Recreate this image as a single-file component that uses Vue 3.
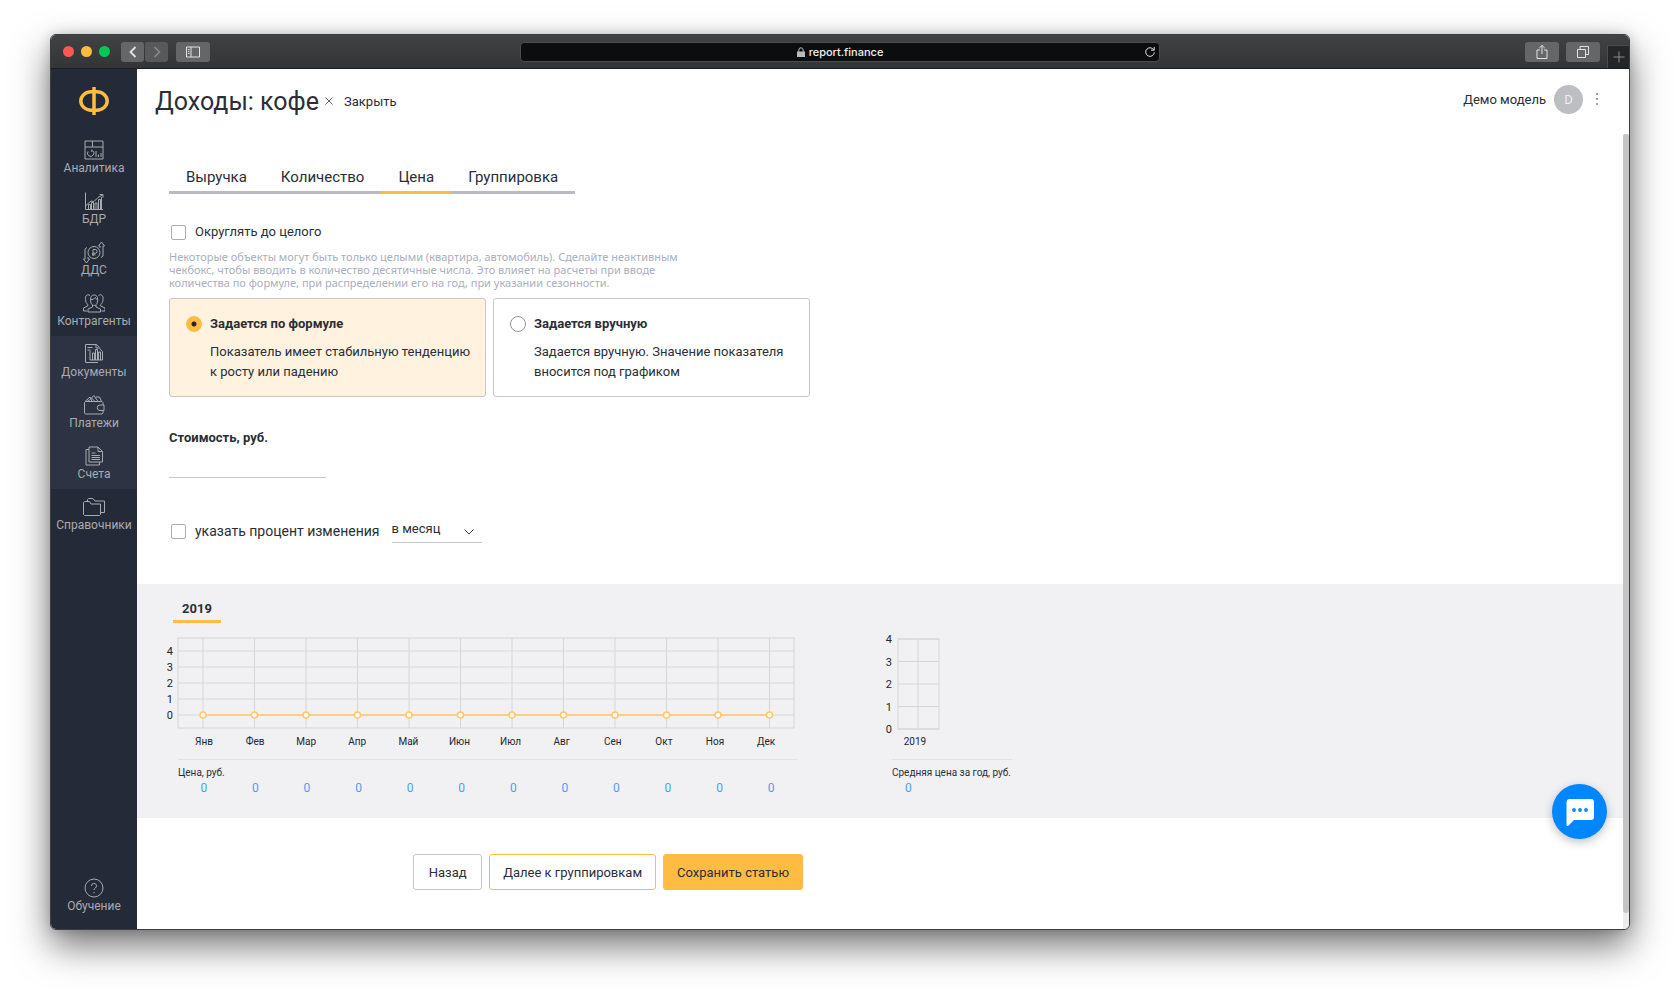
<script setup>
import { ref } from 'vue'

const mainNav = [
  { label: 'Аналитика', d: 'M2 2h18v18H2z M2 8h18 M9.500 2v6 M5 12.500a3.200 3.200 0 1 0 4.600-.9 M8.800 10.500v2.500 M13 18v-6 M15.500 18v-2.500 M18 18v-4' },
  { label: 'БДР', d: 'M2.500 2.500v17h17.500 M5.500 19v-4.500h2V19 M8.500 19v-6.500h2V19 M12 19v-6h2v6 M15.500 19V9.500h2V19 M18.500 19V7 M3 15.500l5-4.500 3 .5 4-4 4.500-2.500 M16.500 4.500h3.500v3' },
  { label: 'ДДС', d: 'M17 11.500a6 6 0 1 1-12 0a6 6 0 1 1 12 0 M10 15V8.500h2.200a1.900 1.900 0 0 1 0 3.800H9 M9 13.800h3.500 M2 8v10H.5l3 4 3-4H5v-2 M2 8l2-1.500 M20 15V5h1.500l-3-4-3 4H17v2 M20 15l-2 1.500' },
  { label: 'Контрагенты', d: 'M7.500 7.500a3.600 4.500 0 0 1 7.200 0c0 4-1.700 6-3.600 6s-3.600-2-3.600-6z M7.500 7.500c2 .5 4-1 5-2 .5 1.500 1.200 2 2.200 2.200 M9.500 13v2l-4.500 2v3h12.500v-3L13 15v-2 M7 3.500C4 1.500 2 4 2.500 7.500c.2 3 1 4 2.300 5v1.500L.5 16v3H4 M15.500 3.500c3-2 5 .5 4.500 4-.2 3-1 4-2.300 5v1.500l4.300 2v3h-3.500' },
]
const docNav = [
  { label: 'Документы', d: 'M15 19.500H2.500v-18h11l3 3 M13 1.500v3.500h3.500 M4.500 4.500h5 M4.500 7h3 M7 8v9h12.500V8.500L16.500 5.500 M9.500 17v-7h2v7 M12.500 17V6.500h2V17 M15.500 17V9h2v8' },
  { label: 'Платежи', d: 'M20 11V8.500l-1-1H2.500l-1 1V19l1 1H19l1-1v-2.500 M21 11h-4a2.700 2.700 0 0 0 0 5.500h4z M2 7.500L7 3l2 4.500 M5 7.500L11 1.500l4 6 M4.500 5.500l1.500 2 M8 3.500l4 4 M13 3h3.500l2 4.500' },
  { label: 'Счета', d: 'M6 2h9l4.500 4.500V17H6z M15 2v4.500h4.500 M6 4.500H3V20h13.500v-3 M8.500 8h4 M8.500 10.500h8.500 M8.500 12.500h8.500 M8.500 14.500h8.500' },
]
const refNav = [
  { label: 'Справочники', d: 'M.5 18.500V6.500l1-1h5l1.500 2.500h9.500v10.500l-1 1h-15z M4.500 5.500V3.500l1-1h4.500L12 5h9.500v11.500h-4' },
]
const helpNav = [
  { label: 'Обучение', d: 'M20 11a9 9 0 1 1-18 0a9 9 0 1 1 18 0 M8.500 9a2.500 2.500 0 1 1 3.800 2c-.9.6-1.300 1-1.300 2 M11 15v1.200' },
]
const navGroups = [
  { name: 'main', items: mainNav },
  { name: 'docs', items: docNav },
  { name: 'refs', items: refNav },
  { name: 'help', items: helpNav },
]

const tabs = ['Выручка', 'Количество', 'Цена', 'Группировка']
const activeTab = ref('Цена')

const modes = [
  { id: 'formula', title: 'Задается по формуле', text: 'Показатель имеет стабильную тенденцию к росту или падению' },
  { id: 'manual', title: 'Задается вручную', text: 'Задается вручную. Значение показателя вносится под графиком' },
]
const mode = ref('formula')

const roundValues = ref(false)
const usePercent = ref(false)
const cost = ref('')
const period = ref('month')

const months = ['Янв', 'Фев', 'Мар', 'Апр', 'Май', 'Июн', 'Июл', 'Авг', 'Сен', 'Окт', 'Ноя', 'Дек']
const prices = ref(months.map(() => 0))
const ticks = [4, 3, 2, 1, 0]

const monthX = (i) => 37 + i * 51.5
const priceY = (v) => 78 - v * 16
const yearY = (v) => 92 - v * 22.5
</script>

<template>
  <div class="window">
    <header class="titlebar">
      <div class="titlebar__left">
        <i class="light light--close"></i>
        <i class="light light--min"></i>
        <i class="light light--max"></i>
        <button class="chrome-btn chrome-btn--back" aria-label="Back">
          <svg width="12" height="14" viewBox="0 0 12 14"><path d="M8.500 2L3.500 7l5 5" stroke-width="1.800"/></svg>
        </button>
        <button class="chrome-btn chrome-btn--forward" aria-label="Forward">
          <svg width="12" height="14" viewBox="0 0 12 14"><path d="M3.500 2l5 5-5 5" stroke-width="1.500"/></svg>
        </button>
        <button class="chrome-btn chrome-btn--wide chrome-btn--side" aria-label="Sidebar">
          <svg width="16" height="12" viewBox="0 0 16 12"><path d="M1.500 1h13v10h-13z M6 1v10 M3 3.500h1.500 M3 5.500h1.500 M3 7.500h1.500"/></svg>
        </button>
      </div>
      <div class="address">
        <svg width="8" height="10" viewBox="0 0 8 10"><path d="M0 4.500h8V10H0z" fill="#b9babb"/><path d="M1.800 5V3a2.200 2.200 0 0 1 4.400 0v2" fill="none" stroke="#b9babb"/></svg>
        <span>report.finance</span>
        <button class="address__reload" aria-label="Reload">
          <svg width="12" height="12" viewBox="0 0 12 12"><path d="M9.800 4A4.300 4.300 0 1 0 10.300 6.500 M10.200 1v3.200H7"/></svg>
        </button>
      </div>
      <div class="titlebar__right">
        <button class="chrome-btn chrome-btn--wide" aria-label="Share">
          <svg width="14" height="16" viewBox="0 0 14 16"><path d="M5 6H2v8.500h10V6H9 M7 10V1.500 M4.300 4L7 1.500 9.700 4"/></svg>
        </button>
        <button class="chrome-btn chrome-btn--wide" aria-label="Tabs">
          <svg width="14" height="14" viewBox="0 0 14 14"><path d="M1.500 4.500h8v8h-8z M4 4.500v-3h8.500v8H9.500"/></svg>
        </button>
        <button class="new-tab" aria-label="New tab">
          <svg width="12" height="12" viewBox="0 0 12 12"><path d="M6 .5v11 M.5 6h11"/></svg>
        </button>
      </div>
    </header>

    <div class="body">
      <aside class="sidebar">
        <a class="logo" href="#" aria-label="report.finance">
          <svg width="30" height="28" viewBox="0 0 30 28"><rect x="1.800" y="4.800" width="26.400" height="18.400" rx="10.500" ry="9.200"/><path d="M15 0v28"/></svg>
        </a>
        <nav v-for="g in navGroups" :key="g.name" :class="['nav', `nav--${g.name}`]">
          <a v-for="item in g.items" :key="item.label" class="nav__item" href="#">
            <svg width="22" height="22" viewBox="0 0 22 22"><path :d="item.d"/></svg>
            <span>{{ item.label }}</span>
          </a>
        </nav>
      </aside>

      <main class="content">
        <div class="head">
          <h1>Доходы: кофе</h1>
          <button class="close">
            <svg width="8" height="8" viewBox="0 0 8 8"><path d="M.5.5l7 7 M7.500.5l-7 7"/></svg>
            <span>Закрыть</span>
          </button>
          <div class="user">
            <span>Демо модель</span>
            <span class="avatar">D</span>
            <button class="more" aria-label="Меню"><i></i><i></i><i></i></button>
          </div>
        </div>

        <form class="form" @submit.prevent>
          <div class="tabs">
            <button
              v-for="t in tabs"
              :key="t"
              type="button"
              :class="['tab', { 'tab--active': t === activeTab }]"
              @click="activeTab = t"
            >{{ t }}</button>
          </div>

          <label class="check">
            <input v-model="roundValues" type="checkbox">
            <span>Округлять до целого</span>
          </label>
          <p class="hint">
            Некоторые объекты могут быть только целыми (квартира, автомобиль). Сделайте неактивным<br>
            чекбокс, чтобы вводить в количество десятичные числа. Это влияет на расчеты при вводе<br>
            количества по формуле, при распределении его на год, при указании сезонности.
          </p>

          <div class="modes">
            <label v-for="m in modes" :key="m.id" :class="['mode', { 'mode--active': m.id === mode }]">
              <input v-model="mode" type="radio" name="mode" :value="m.id">
              <span class="mode__body">
                <b>{{ m.title }}</b>
                <span class="mode__text">{{ m.text }}</span>
              </span>
            </label>
          </div>

          <label class="cost">
            <b>Стоимость, руб.</b>
            <input v-model="cost" type="text">
          </label>

          <div class="percent">
            <label class="check check--large">
              <input v-model="usePercent" type="checkbox">
              <span>указать процент изменения</span>
            </label>
            <div class="period">
              <select v-model="period" aria-label="Период">
                <option value="month">в месяц</option>
                <option value="year">в год</option>
              </select>
              <svg width="12" height="8" viewBox="0 0 12 8"><path d="M1.500 1.500L6 6l4.500-4.500"/></svg>
            </div>
          </div>
        </form>

        <section class="charts">
          <button class="year">2019</button>
          <div class="charts__row">
            <div class="chart">
              <svg class="plot" width="640" height="114" viewBox="0 0 640 114">
                <rect class="grid" x="12" y="1" width="616" height="90"/>
                <line v-for="t in ticks" :key="`h${t}`" class="grid" x1="12" x2="628" :y1="priceY(t)" :y2="priceY(t)"/>
                <line v-for="(m, i) in months" :key="`v${m}`" class="grid" :x1="monthX(i)" :x2="monthX(i)" y1="1" y2="91"/>
                <polyline class="series" :points="prices.map((p, i) => `${monthX(i)},${priceY(p)}`).join(' ')"/>
                <circle v-for="(p, i) in prices" :key="`c${i}`" class="dot" :cx="monthX(i)" :cy="priceY(p)" r="3"/>
                <text v-for="t in ticks" :key="`t${t}`" x="7" :y="priceY(t) + 4" text-anchor="end">{{ t }}</text>
                <text v-for="(m, i) in months" :key="m" class="month" :x="38 + i * 51.1" y="108" text-anchor="middle">{{ m }}</text>
              </svg>
              <table class="values">
                <caption>Цена, руб.</caption>
                <tbody>
                  <tr><td v-for="(p, i) in prices" :key="i">{{ p }}</td></tr>
                </tbody>
              </table>
            </div>
            <div class="chart">
              <svg class="plot" width="120" height="114" viewBox="0 0 120 114">
                <rect class="grid" x="12" y="2" width="41" height="90"/>
                <line v-for="t in ticks" :key="`h${t}`" class="grid" x1="12" x2="53" :y1="yearY(t)" :y2="yearY(t)"/>
                <line class="grid" x1="32" x2="32" y1="2" y2="92"/>
                <text v-for="t in ticks" :key="`t${t}`" x="6" :y="yearY(t) + 4" text-anchor="end">{{ t }}</text>
                <text class="month" x="29" y="108" text-anchor="middle">2019</text>
              </svg>
              <table class="values values--year">
                <caption>Средняя цена за год, руб.</caption>
                <tbody>
                  <tr><td>0</td></tr>
                </tbody>
              </table>
            </div>
          </div>
        </section>

        <footer class="actions">
          <button class="btn">Назад</button>
          <button class="btn btn--outline">Далее к группировкам</button>
          <button class="btn btn--primary">Сохранить статью</button>
        </footer>

        <div class="scroll"><div class="scroll__thumb"></div></div>
        <button class="chat" aria-label="Чат">
          <svg width="28" height="28" viewBox="0 0 28 28"><path d="M3 1h22a3 3 0 0 1 3 3v15a3 3 0 0 1-3 3H8l-5.500 5.500C1.500 28.500.5 28 .5 27V4A3 3 0 0 1 3 1z" fill="#fff"/><g fill="#0086ff"><circle cx="8" cy="12" r="1.900"/><circle cx="14" cy="12" r="1.900"/><circle cx="20" cy="12" r="1.900"/></g></svg>
        </button>
      </main>
    </div>
  </div>
</template>

<style>
body {
  margin: 0;
  background: #fff;
}
</style>

<style scoped>
* {
  box-sizing: border-box;
}

button,
input,
select {
  margin: 0;
  padding: 0;
  border: 0;
  background: none;
  color: inherit;
  font: inherit;
}

button {
  cursor: pointer;
}

.window {
  display: flex;
  flex-direction: column;
  min-height: calc(100vh - 100px);
  margin: 34px 50px 66px;
  overflow: hidden;
  border: 1px solid #3c3d3e;
  border-radius: 6px;
  background: #fff;
  color: #2b2e36;
  font-family: Roboto, "Noto Sans", sans-serif;
  font-size: 13px;
  box-shadow: 0 16px 36px rgba(0, 0, 0, 0.55), 0 0 12px rgba(0, 0, 0, 0.15);
}

/* browser bar */
.titlebar {
  display: grid;
  grid-template-columns: 1fr 640px 1fr;
  align-items: center;
  height: 34px;
  border-bottom: 1px solid #1c1d1e;
  background: linear-gradient(#404243, #333435);
}

.titlebar__left,
.titlebar__right {
  display: flex;
  align-items: center;
}

.titlebar__left {
  padding-left: 12px;
}

.titlebar__right {
  align-self: stretch;
  justify-content: flex-end;
  gap: 7px;
}

.light {
  width: 11px;
  height: 11px;
  margin-right: 7px;
  border-radius: 50%;
}

.light--close {
  background: #fc5753;
}

.light--min {
  background: #fdbc40;
}

.light--max {
  background: #05c753;
}

.chrome-btn {
  display: flex;
  align-items: center;
  justify-content: center;
  width: 23px;
  height: 20px;
  border-radius: 3px;
  background: #656667;
}

.chrome-btn svg,
.new-tab svg,
.address__reload svg {
  fill: none;
  stroke: #e2e2e2;
}

.chrome-btn--back {
  margin-left: 4px;
}

.chrome-btn--forward {
  margin-left: 1px;
  background: #58595a;
}

.chrome-btn--forward svg {
  stroke: #8a8b8c;
}

.chrome-btn--wide {
  width: 34px;
}

.chrome-btn--side {
  margin-left: 8px;
}

.address {
  position: relative;
  display: flex;
  align-items: center;
  justify-content: center;
  gap: 4px;
  height: 20px;
  border: 1px solid #4b4c4d;
  border-radius: 4px;
  background: #0c0d0e;
  color: #f0f0f0;
  font-family: Inter, sans-serif;
  font-size: 11px;
  font-weight: 500;
}

.address__reload {
  position: absolute;
  right: 3px;
  display: flex;
}

.new-tab {
  display: flex;
  align-items: center;
  justify-content: center;
  align-self: flex-end;
  width: 22px;
  height: 23px;
  border: 1px solid #4b4c4d;
  border-width: 1px 0 0 1px;
  background: #252627;
}

.new-tab svg {
  stroke: #8a8b8c;
}

.body {
  display: flex;
  flex: 1;
}

/* sidebar */
.sidebar {
  display: flex;
  flex-direction: column;
  flex: none;
  width: 86px;
  padding-bottom: 8px;
  background: #242a37;
}

.logo {
  display: flex;
  justify-content: center;
  height: 63px;
  padding-top: 18px;
}

.logo svg {
  fill: none;
  stroke: #ffbc42;
  stroke-width: 3.5;
}

.nav--docs {
  background: #2d3343;
}

.nav--help {
  margin-top: auto;
}

.nav__item {
  display: flex;
  flex-direction: column;
  align-items: center;
  height: 51px;
  padding-top: 7px;
  color: #a9abb1;
  font-size: 12px;
  line-height: 14px;
  text-decoration: none;
}

.nav__item svg {
  fill: none;
  stroke: #a9abb1;
  stroke-width: 1;
}

/* page head */
.content {
  position: relative;
  flex: 1;
  min-width: 0;
}

.head {
  display: flex;
  align-items: center;
  height: 64px;
  padding: 0 26px 0 18px;
}

.head h1 {
  margin: 0;
  padding-top: 2px;
  font-size: 25px;
  font-weight: 400;
  line-height: 32px;
}

.close {
  display: flex;
  align-items: center;
  gap: 11px;
  margin-left: 6px;
}

.close svg {
  fill: none;
  stroke: #5c6270;
}

.user {
  display: flex;
  align-items: center;
  gap: 8px;
  margin-left: auto;
  padding-bottom: 4px;
}

.avatar {
  display: flex;
  align-items: center;
  justify-content: center;
  width: 29px;
  height: 29px;
  border-radius: 50%;
  background: #bdbec2;
  color: #eeeeef;
}

.more {
  display: flex;
  flex-direction: column;
  align-items: center;
  gap: 3px;
  width: 12px;
}

.more i {
  width: 2px;
  height: 2px;
  border-radius: 50%;
  background: #7c808a;
}

/* form */
.form {
  padding: 21px 32px 41px;
}

.tabs {
  display: inline-flex;
  vertical-align: top;
}

.tab {
  height: 40px;
  padding: 8px 17px 0;
  border-bottom: 3px solid #b9bbc0;
  font-size: 15px;
  line-height: 18px;
}

.tab--active {
  border-bottom-color: #ffbc42;
}

.check {
  display: flex;
  align-items: center;
  gap: 9px;
  width: max-content;
  margin-top: 28px;
  padding-left: 2px;
  line-height: 20px;
}

.check input {
  width: 15px;
  height: 15px;
  appearance: none;
  border: 1px solid #a9acb5;
  border-radius: 2px;
  background: #fff;
}

.check input:checked {
  background: #ffbc42;
}

.check--large {
  margin-top: 0;
  font-size: 14px;
}

.hint {
  margin: 8px 0 9px;
  color: #a9afbd;
  font-family: "Noto Sans", sans-serif;
  font-size: 11px;
  line-height: 13px;
}

.modes {
  display: flex;
  gap: 7px;
}

.mode {
  display: flex;
  align-items: flex-start;
  gap: 8px;
  width: 317px;
  padding: 15px 15px 14px 16px;
  border: 1px solid #c4c5c9;
  border-radius: 3px;
  line-height: 20px;
}

.mode--active {
  background: #fff3df;
}

.mode input {
  flex: none;
  width: 16px;
  height: 16px;
  margin-top: 2px;
  appearance: none;
  border: 1px solid #92959e;
  border-radius: 50%;
  background: #fff;
}

.mode input:checked {
  border-color: #ffbc42;
  background: radial-gradient(circle, #23262f 2px, #ffbc42 3px);
}

.mode__body b,
.mode__text {
  display: block;
}

.mode__text {
  margin-top: 8px;
}

.cost {
  display: block;
  width: 157px;
  margin-top: 31px;
}

.cost b {
  display: block;
  line-height: 20px;
}

.cost input {
  width: 100%;
  height: 30px;
  border-bottom: 1px solid #c4c5c9;
}

.percent {
  display: flex;
  align-items: center;
  gap: 12px;
  margin-top: 41px;
}

.period {
  position: relative;
  width: 90px;
}

.period select {
  width: 100%;
  height: 24px;
  padding-bottom: 4px;
  appearance: none;
  border-bottom: 1px solid #c4c5c9;
  border-radius: 0;
}

.period svg {
  position: absolute;
  top: 9px;
  right: 7px;
  fill: none;
  stroke: #3a3d46;
  pointer-events: none;
}

/* charts */
.charts {
  padding: 14px 29px 22px;
  margin-right: 6px;
  background: #f1f1f3;
}

.year {
  height: 25px;
  margin-left: 7px;
  padding: 0 9px 2px;
  border-bottom: 3px solid #ffbc42;
  font-weight: 700;
}

.charts__row {
  display: flex;
  gap: 80px;
  padding-top: 14px;
}

.plot {
  display: block;
  overflow: visible;
}

.plot text {
  fill: #23262f;
  font-size: 11px;
}

.plot .month {
  font-size: 10px;
}

.grid {
  fill: none;
  stroke: #d6d6d8;
}

.series {
  fill: none;
  stroke: #ffc96b;
  stroke-width: 1.5;
}

.dot {
  fill: #fff;
  stroke: #ffc96b;
  stroke-width: 1.5;
}

.values {
  width: 619px;
  margin: 8px 0 0 12px;
  border-collapse: collapse;
  table-layout: fixed;
}

.values caption {
  padding-top: 5px;
  border-top: 1px solid #e2e2e4;
  font-size: 10px;
  line-height: 15px;
  text-align: left;
  white-space: nowrap;
}

.values td {
  padding: 0;
  color: #4a9ff0;
  font-size: 12px;
  line-height: 16px;
  text-align: center;
}

.values--year {
  width: 120px;
  margin-left: 6px;
}

.values--year td {
  padding-left: 13px;
  text-align: left;
}

/* bottom buttons */
.actions {
  display: flex;
  justify-content: flex-end;
  gap: 7px;
  width: 666px;
  padding: 36px 0;
}

.btn {
  min-width: 69px;
  height: 36px;
  padding: 0 13px;
  border: 1px solid #c4c5c9;
  border-radius: 3px;
}

.btn--outline {
  border-color: #ffbc42;
}

.btn--primary {
  border-color: #ffbc42;
  background: #ffbc42;
}

/* floating parts */
.scroll {
  position: absolute;
  top: 65px;
  right: 0;
  bottom: 0;
  width: 6px;
  background: #ececec;
}

.scroll__thumb {
  height: calc(100% - 16px);
  border-radius: 3px;
  background: #c4c4c4;
}

.chat {
  position: absolute;
  right: 22px;
  bottom: 90px;
  display: flex;
  align-items: center;
  justify-content: center;
  width: 55px;
  height: 55px;
  border-radius: 50%;
  background: #0086ff;
  box-shadow: 0 3px 10px rgba(0, 0, 0, 0.25);
}
</style>
